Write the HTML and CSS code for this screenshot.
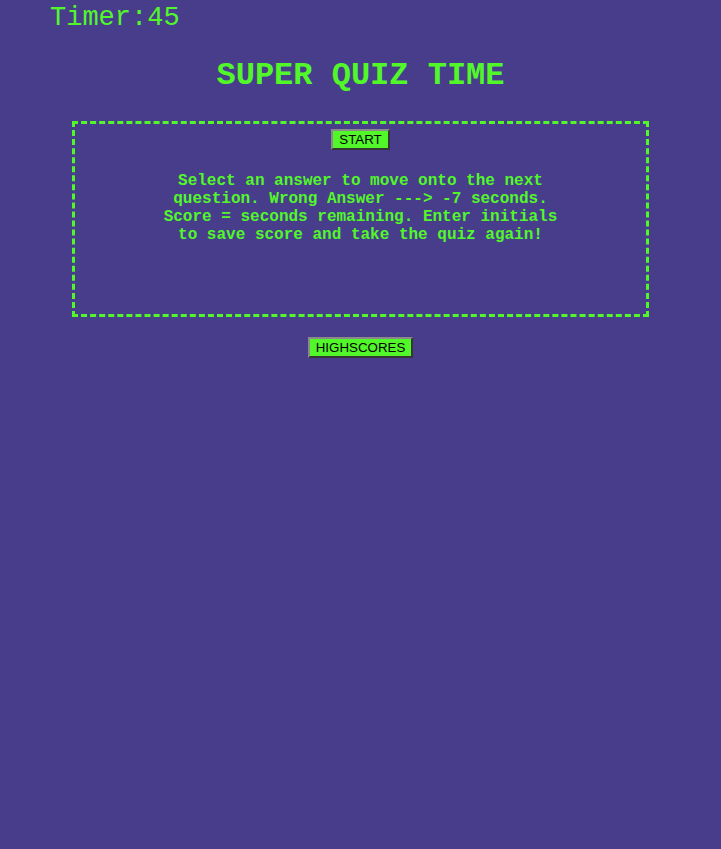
FILE: index.html
```html
<!DOCTYPE html>
<html>
<head>
<meta charset="utf-8">
<title>Super Quiz Time</title>
<link rel="stylesheet" href="styles.css">
</head>
<body>
<header class="timer">Timer:45</header>
<h1 class="title">SUPER QUIZ TIME</h1>
<main class="quiz-box">
  <button class="btn">START</button>
  <p class="instructions">Select an answer to move onto the next question. Wrong Answer ---&gt; -7 seconds. Score = seconds remaining. Enter initials to save score and take the quiz again!</p>
</main>
<div class="bottom">
  <button class="btn">HIGHSCORES</button>
</div>
</body>
</html>
```

FILE: styles.css
```css
html, body {
  margin: 0;
  padding: 0;
}
body {
  background: #483d8b;
  color: #52f72a;
  font-family: "Liberation Mono", "Courier New", monospace;
  min-height: 849px;
}
.timer {
  font-size: 27px;
  line-height: 31px;
  padding: 3px 0 0 50px;
}
.title {
  font-size: 32px;
  font-weight: bold;
  text-align: center;
  margin: 24px 0 27px;
  line-height: 36px;
}
.quiz-box {
  margin: 0 10%;
  border: 3px dashed #52f72a;
  display: flex;
  flex-direction: column;
  align-items: center;
  padding-top: 5px;
  box-sizing: border-box;
  height: 196px;
}
.btn {
  font-family: "Liberation Sans", Arial, sans-serif;
  font-size: 13.33px;
  background: #52f72a;
  color: #000;
  border: 2px outset #8a8a8a;
  padding: 1px 6px;
  line-height: 15px;
  cursor: pointer;
}
.instructions {
  width: 70%;
  text-align: center;
  font-size: 16px;
  font-weight: bold;
  line-height: 18px;
  margin: 22px 0 0;
}
.bottom {
  display: flex;
  justify-content: center;
  padding-top: 20px;
}
```
